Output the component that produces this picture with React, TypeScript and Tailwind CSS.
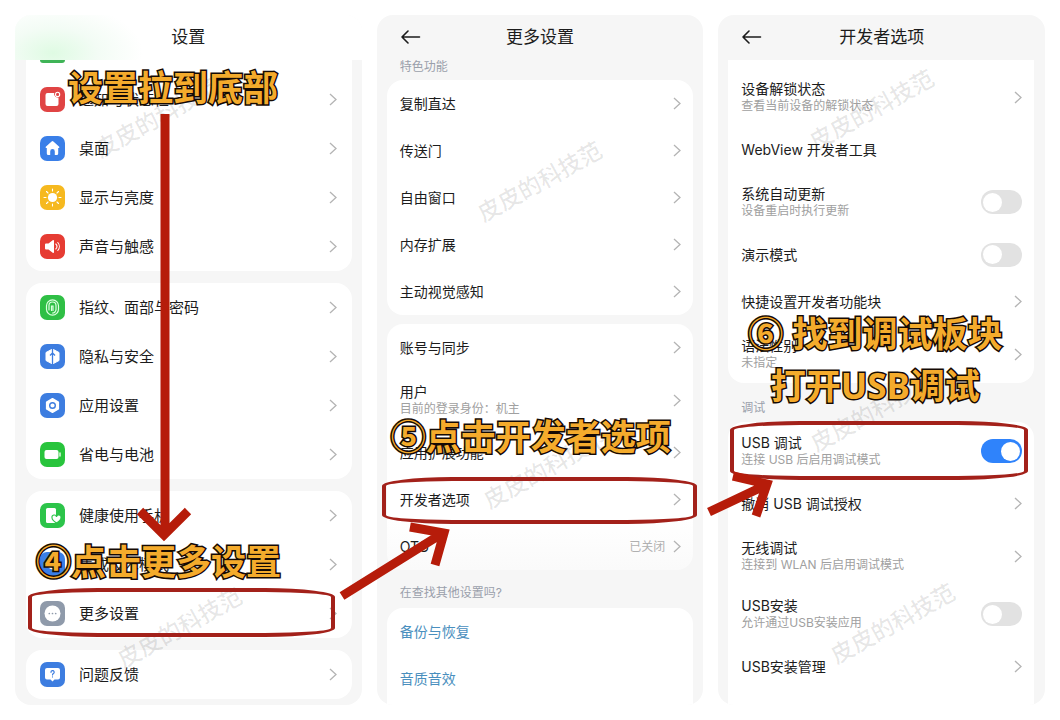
import type { ReactNode } from "react"

const tiles = {
    notify: {
        bg: "bg-[#e04444]",
        art: (
            <>
                <path d="M7.5 6h6.700a3.600 3.600 0 0 0 4.300 4.400V17a2 2 0 0 1-2 2h-9a2 2 0 0 1-2-2V8a2 2 0 0 1 2-2Z" fill="#fff" />
                <circle cx="17.6" cy="7.4" r="2.1" fill="none" stroke="#fff" strokeWidth="1.1" />
            </>
        ),
    },
    home: {
        bg: "bg-[#3a7fe8]",
        art: (
            <path
                d="M11.6 5.5a1.4 1.4 0 0 1 1.8 0l5.8 5.3c.5.5.2 1.2-.5 1.2h-.5v5.500a1.500 1.500 0 0 1-1.500 1.500h-1.900v-3.600a2.300 2.300 0 0 0-4.600 0V19H8.300a1.500 1.500 0 0 1-1.500-1.500V12h-.5c-.7 0-1-.7-.5-1.200Z"
                fill="#fff"
            />
        ),
    },
    sun: {
        bg: "bg-[#f6b91f]",
        art: (
            <>
                <circle cx="12.5" cy="12.5" r="4.6" fill="#fff" />
                <path
                    d="M12.5 4v2M12.5 19v2M4 12.5h2M19 12.5h2M6.500 6.500 8 8M17 17l1.500 1.500M6.500 18.500 8 17M17 8l1.500-1.500"
                    stroke="#fff"
                    strokeWidth="1.1"
                    strokeLinecap="round"
                />
            </>
        ),
    },
    sound: {
        bg: "bg-[#e63c33]",
        art: (
            <>
                <path d="M5 10.500a1 1 0 0 1 1-1h2.500l4.200-3.300c.6-.5 1.300-.1 1.300.6v11.400c0 .7-.7 1.100-1.300.6L8.500 15.500H6a1 1 0 0 1-1-1Z" fill="#fff" />
                <path d="M15.8 10a3.600 3.600 0 0 1 0 5M17.800 8.500a6 6 0 0 1 0 8" fill="none" stroke="#fff" strokeWidth="1.1" strokeLinecap="round" />
            </>
        ),
    },
    finger: {
        bg: "bg-[#2fbf45]",
        art: (
            <g fill="none" stroke="#dcffdf" strokeWidth="1.2" strokeLinecap="round">
                <rect x="6.5" y="4.8" width="12" height="15.4" rx="6" />
                <path d="M9 15v-4.500a3.500 3.500 0 0 1 7 0v4a3.500 3.500 0 0 1-3.500 3.500" />
                <path d="M11.500 15.500v-4.500h1.500v4.500" />
            </g>
        ),
    },
    privacy: {
        bg: "bg-[#3d7de0]",
        art: (
            <>
                <path d="m12.5 5 6.500 3.500v8L12.500 20 6 16.500v-8Z" fill="#fff" stroke="#fff" strokeLinejoin="round" />
                <path d="M12.5 4v17M10 11.500l2.500-2.500 2.500 2.500" fill="none" stroke="#3d7de0" strokeWidth="1.3" />
            </>
        ),
    },
    apps: {
        bg: "bg-[#3d7de0]",
        art: (
            <>
                <path d="m12.5 5.800 5.800 3.300v6.800l-5.800 3.300-5.800-3.300V9.100Z" fill="#fff" stroke="#fff" strokeWidth="1.6" strokeLinejoin="round" />
                <circle cx="12.5" cy="12.5" r="2.8" fill="none" stroke="#3d7de0" strokeWidth="1.4" />
            </>
        ),
    },
    battery: {
        bg: "bg-[#28c43c]",
        art: (
            <>
                <rect x="4.5" y="8" width="14" height="9" rx="2" fill="#fff" />
                <path d="M20 11v3" stroke="#fff" strokeWidth="1.3" strokeLinecap="round" />
            </>
        ),
    },
    health: {
        bg: "bg-[#2cc44a]",
        art: (
            <>
                <rect x="6" y="5" width="10" height="15" rx="1.5" fill="#fff" />
                <path
                    d="M16.500 20c-2.500-1.500-4.500-3-4.500-5.200a2.300 2.300 0 0 1 4.500-1 2.300 2.300 0 0 1 4.500 1c0 2.200-2 3.700-4.500 5.200Z"
                    fill="#fff"
                    stroke="#2cc44a"
                    strokeWidth="1.1"
                />
            </>
        ),
    },
    mode: {
        bg: "bg-[#3a7fe8]",
        art: <circle cx="12.5" cy="12.5" r="4" fill="none" stroke="#fff" strokeWidth="2" />,
    },
    more: {
        bg: "bg-[#8f9aaa]",
        art: (
            <>
                <circle cx="12.5" cy="12.5" r="8" fill="#fff" />
                <path d="M9.300 12.500h.01M12.500 12.500h.01M15.700 12.500h.01" stroke="#8f9aaa" strokeWidth="1.7" strokeLinecap="round" />
            </>
        ),
    },
    feedback: {
        bg: "bg-[#3d7de0]",
        art: (
            <>
                <path d="M7 6h11a2 2 0 0 1 2 2v7.500a2 2 0 0 1-2 2h-3.500l-2 2-2-2H7a2 2 0 0 1-2-2V8a2 2 0 0 1 2-2Z" fill="#fff" />
                <path d="M11 10.300a1.600 1.600 0 1 1 2.400 1.300c-.6.4-.9.7-.9 1.300M12.500 14.900v.1" fill="none" stroke="#3d7de0" strokeWidth="1.2" strokeLinecap="round" />
            </>
        ),
    },
}

type TileName = keyof typeof tiles

const homeGroups: { tile: TileName; label: string }[][] = [
    [
        { tile: "notify", label: "通知与状态栏" },
        { tile: "home", label: "桌面" },
        { tile: "sun", label: "显示与亮度" },
        { tile: "sound", label: "声音与触感" },
    ],
    [
        { tile: "finger", label: "指纹、面部与密码" },
        { tile: "privacy", label: "隐私与安全" },
        { tile: "apps", label: "应用设置" },
        { tile: "battery", label: "省电与电池" },
    ],
    [
        { tile: "health", label: "健康使用手机" },
        { tile: "mode", label: "集成技术模式" },
        { tile: "more", label: "更多设置" },
    ],
    [{ tile: "feedback", label: "问题反馈" }],
]

function Chevron() {
    return (
        <svg className="h-[13px] w-2 shrink-0" viewBox="0 0 8 13" fill="none" stroke="#b4b4b4" strokeWidth="1.3">
            <path d="m1 1 6 5.500L1 12" />
        </svg>
    )
}

function TileRow({ tile, label }: { tile: TileName; label: string }) {
    return (
        <button className="flex h-[49px] w-full items-center gap-3.5 pr-[15px] pl-3.5 text-left text-[15px]">
            <svg className={`size-[25px] shrink-0 rounded-[7px] ${tiles[tile].bg}`} viewBox="0 0 25 25">
                {tiles[tile].art}
            </svg>
            <span className="flex-1 pt-0.5">{label}</span>
            <Chevron />
        </button>
    )
}

function RowText({ label, note }: { label: string; note?: string }) {
    return (
        <span className="flex flex-1 flex-col">
            <span className="text-sm leading-[18px]">{label}</span>
            {note && <span className="text-xs leading-4 text-[#a0a0a0]">{note}</span>}
        </span>
    )
}

function Row({ label, note, value, plain }: { label: string; note?: string; value?: string; plain?: boolean }) {
    return (
        <button className={`flex w-full items-center gap-2 pr-3 pl-[13px] text-left ${note ? "h-[58px]" : "h-[47px]"}`}>
            <RowText label={label} note={note} />
            {value && <span className="text-xs text-[#b0b0b0]">{value}</span>}
            {!plain && <Chevron />}
        </button>
    )
}

function SwitchRow({ label, note, on }: { label: string; note?: string; on?: boolean }) {
    return (
        <label className={`flex items-center pr-3 pl-[13px] ${note ? "h-[58px]" : "h-[47px]"}`}>
            <RowText label={label} note={note} />
            <input
                type="checkbox"
                role="switch"
                defaultChecked={on}
                className="flex h-6 w-[41px] shrink-0 appearance-none items-center rounded-full bg-[#e2e2e2] px-[2px] before:size-[19px] before:rounded-full before:bg-white before:content-[''] checked:justify-end checked:bg-[#2f83fb]"
            />
        </label>
    )
}

function Header({ title }: { title: string }) {
    return (
        <header className="grid h-[45px] grid-cols-[1fr_auto_1fr] items-center px-6">
            <button aria-label="返回">
                <svg className="h-4 w-5" viewBox="0 0 20 16" fill="none" stroke="#1c1c1c" strokeWidth="1.6" strokeLinecap="round" strokeLinejoin="round">
                    <path d="M18.500 7H1M7 1 1 7l6 6" />
                </svg>
            </button>
            <h2 className="text-[17px]">{title}</h2>
        </header>
    )
}

function Watermark({ place }: { place: string }) {
    return (
        <span className={`pointer-events-none absolute -rotate-[29deg] text-[23px] leading-6 font-medium whitespace-nowrap text-black/10 ${place}`}>
            皮皮的科技范
        </span>
    )
}

function Caption({ place, children }: { place: string; children: ReactNode }) {
    return (
        <p
            className={`pointer-events-none absolute font-['Noto_Sans','Noto_Sans_CJK_SC',sans-serif] text-[35px] font-bold whitespace-nowrap text-[#f4ab2c] [-webkit-text-stroke:3px_#150a04] [paint-order:stroke_fill] ${place}`}
        >
            {children}
        </p>
    )
}

function Ring({ place }: { place: string }) {
    return <div className={`pointer-events-none absolute rounded-[70px/9px] border-4 border-[#a3211a] ${place}`} />
}

function Arrow({ d }: { d: string }) {
    return (
        <svg className="pointer-events-none absolute top-0 left-0 size-full overflow-visible" fill="none" stroke="#b61c0a" strokeWidth="9">
            <path d={d} />
        </svg>
    )
}

function SettingsPhone() {
    return (
        <section className="relative">
            <div className="overflow-hidden rounded-2xl bg-[#f6f6f6] pb-1.5">
                <header className="flex h-[45px] items-center justify-center bg-white bg-[radial-gradient(ellipse_90px_50px_at_38px_38px,#dffbe3_0%,#f3fcf5_50%,#ffffff_100%)]">
                    <h2 className="text-[17px]">设置</h2>
                </header>
                <div className="flex flex-col gap-3 pr-2.5 pl-[11px]">
                    {homeGroups.map((group, i) => (
                        <div key={i} className={`overflow-hidden bg-white ${i === 0 ? "rounded-b-2xl" : "rounded-2xl"}`}>
                            {/* bottom edge of the icon that is scrolled under the header */}
                            {i === 0 && (
                                <div className="h-[15px] pl-3.5">
                                    <div className="h-[3px] w-[25px] rounded-b-full bg-[#3fb457]" />
                                </div>
                            )}
                            {group.map((row) => (
                                <TileRow key={row.label} {...row} />
                            ))}
                        </div>
                    ))}
                </div>
            </div>
            <Watermark place="left-[73px] top-[91px]" />
            <Watermark place="left-24 top-[601px]" />
            <Ring place="left-[13px] top-[573px] h-[49px] w-[307px]" />
            <Arrow d="M150 99V520M125 496l24 24 24-24" />
            <Caption place="left-[53px] top-[53px] leading-10">设置拉到底部</Caption>
            <Caption place="left-[21px] top-[527px] leading-10">④点击更多设置</Caption>
        </section>
    )
}

function MorePhone() {
    return (
        <section className="relative">
            <div className="flex h-full flex-col overflow-hidden rounded-2xl bg-[#f6f6f6]">
                <Header title="更多设置" />
                <div className="flex flex-1 flex-col px-2.5">
                    <h3 className="h-5 pl-[13px] text-xs leading-[14px] text-[#9aa0ab]">特色功能</h3>
                    <div className="rounded-2xl bg-white">
                        <Row label="复制直达" />
                        <Row label="传送门" />
                        <Row label="自由窗口" />
                        <Row label="内存扩展" />
                        <Row label="主动视觉感知" />
                    </div>
                    <div className="mt-[9px] rounded-2xl bg-linear-to-b from-white from-80% to-[#fafafa]">
                        <Row label="账号与同步" />
                        <Row label="用户" note="目前的登录身份：机主" />
                        <Row label="应用扩展功能" />
                        <Row label="开发者选项" />
                        <Row label="OTG" value="已关闭" />
                    </div>
                    <h3 className="flex h-[38px] items-center pt-2 pl-[13px] text-xs text-[#9aa0ab]">在查找其他设置吗?</h3>
                    <nav className="flex flex-1 flex-col rounded-t-2xl bg-white text-sm text-[#4a8fbe]">
                        <a href="#backup" className="flex h-[47px] items-center pl-[13px]">
                            备份与恢复
                        </a>
                        <a href="#audio" className="flex h-[47px] items-center pl-[13px]">
                            音质音效
                        </a>
                    </nav>
                </div>
            </div>
            <Watermark place="left-[94px] top-[155px]" />
            <Watermark place="left-[100px] top-[442px]" />
            <Ring place="left-[5px] top-[462px] h-[47px] w-[315px]" />
            <Arrow d="M-35 581 66 518M33 512l34 6-9 32" />
            <Caption place="left-3.5 top-[402px] leading-10">⑤点击开发者选项</Caption>
        </section>
    )
}

function DeveloperPhone() {
    return (
        <section className="relative">
            <div className="flex h-full flex-col overflow-hidden rounded-2xl bg-[#f6f6f6]">
                <Header title="开发者选项" />
                <div className="flex flex-1 flex-col pr-[11px] pl-2.5">
                    <div className="rounded-b-2xl bg-white pt-2">
                        <Row label="设备解锁状态" note="查看当前设备的解锁状态" />
                        <Row label="WebView 开发者工具" plain />
                        <SwitchRow label="系统自动更新" note="设备重启时执行更新" />
                        <SwitchRow label="演示模式" />
                        <Row label="快捷设置开发者功能块" />
                        <Row label="语法性别" note="未指定" />
                    </div>
                    <h3 className="flex h-[39px] items-center pt-2.5 pl-[13px] text-xs text-[#9aa0ab]">调试</h3>
                    <div className="flex-1 rounded-t-2xl bg-white">
                        <SwitchRow label="USB 调试" note="连接 USB 后启用调试模式" on />
                        <Row label="撤消 USB 调试授权" />
                        <Row label="无线调试" note="连接到 WLAN 后启用调试模式" />
                        <SwitchRow label="USB安装" note="允许通过USB安装应用" />
                        <Row label="USB安装管理" />
                    </div>
                </div>
            </div>
            <Watermark place="left-[85px] top-[83px]" />
            <Watermark place="left-[86px] top-[385px]" />
            <Watermark place="left-[106px] top-[597px]" />
            <Ring place="left-3 top-[406px] h-[59px] w-[298px]" />
            <Arrow d="m-9 497 57-27M15 461l34 8-11 32" />
            <Caption place="left-[30px] top-[293px] text-center leading-[52px]">
                ⑥ 找到调试板块
                <br />
                打开USB调试
            </Caption>
        </section>
    )
}

export default function App() {
    return (
        <main className="grid grid-cols-[347fr_327fr_327fr] gap-[15px] bg-white p-[15px] font-['Inter','Noto_Sans_CJK_SC',sans-serif] text-[#1c1c1c]">
            <SettingsPhone />
            <MorePhone />
            <DeveloperPhone />
        </main>
    )
}
